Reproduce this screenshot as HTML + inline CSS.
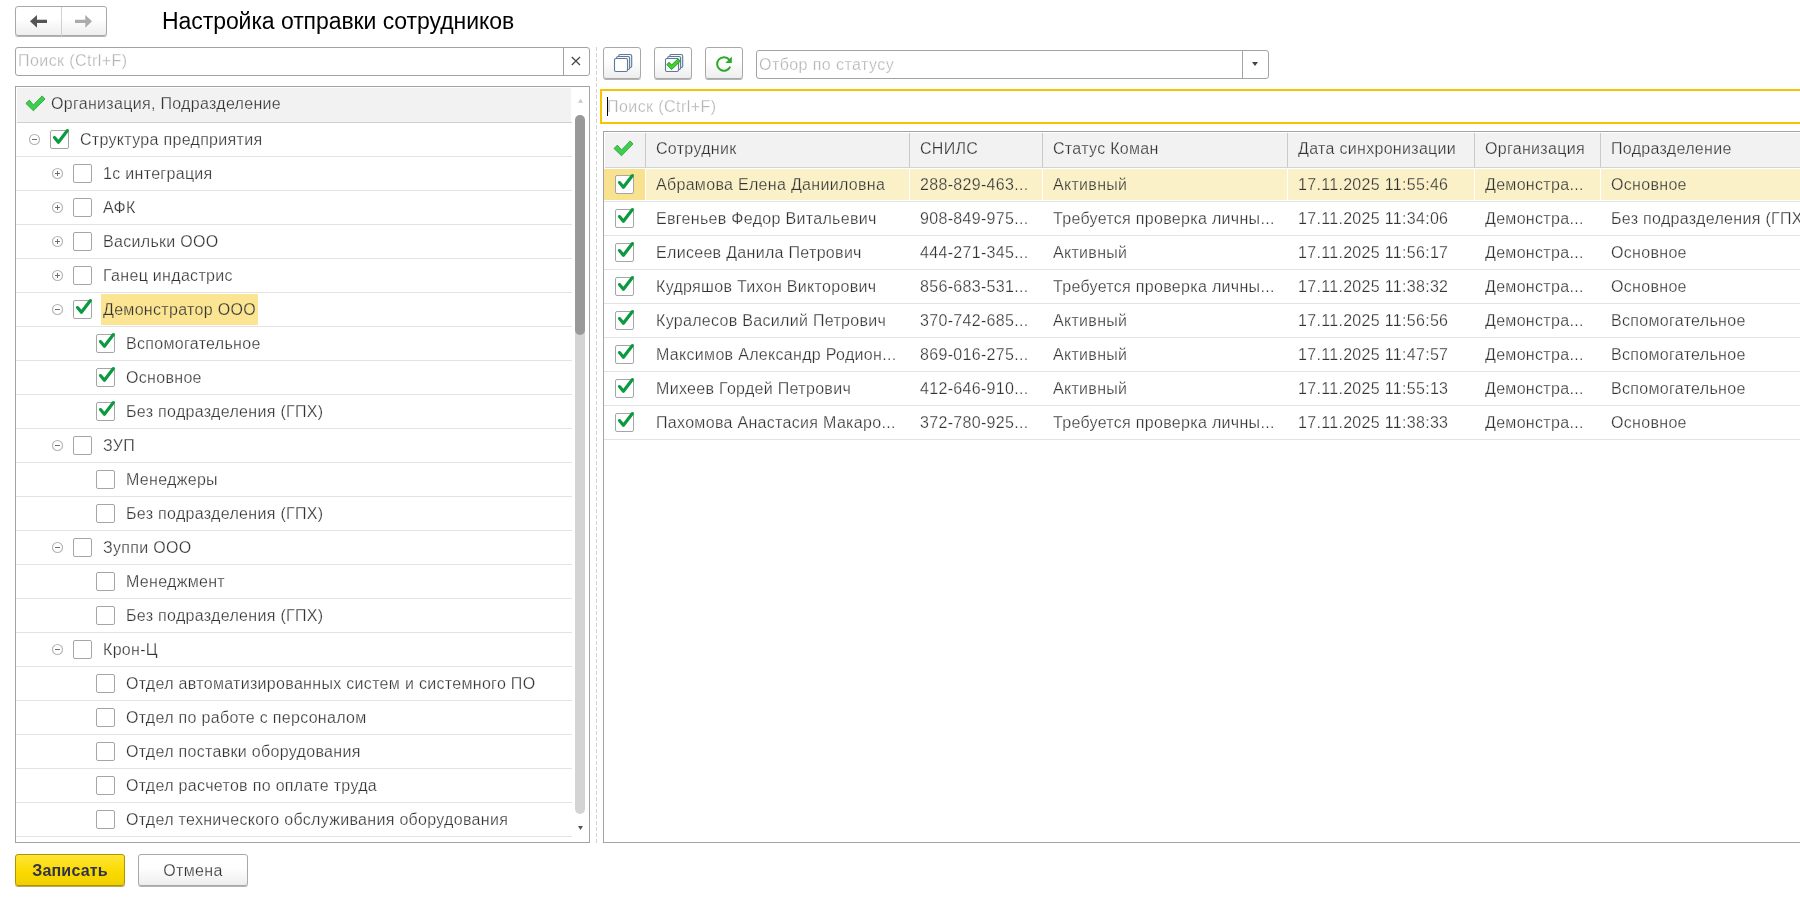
<!DOCTYPE html>
<html><head><meta charset="utf-8">
<style>
*{box-sizing:border-box;margin:0;padding:0}
html,body{width:1800px;height:900px;overflow:hidden;background:#fff;font-family:"Liberation Sans",sans-serif;font-size:16px;color:#333;letter-spacing:0.31px;-webkit-text-stroke:0.25px #fff}
.a{position:absolute}
.btn{position:absolute;border:1px solid #a8a8a8;border-radius:3px;background:linear-gradient(#fff 40%,#eeeeee);box-shadow:0 1px 0 #b4b4b4}
.title{position:absolute;left:162px;top:6px;font-size:23px;letter-spacing:-0.07px;color:#000;-webkit-text-stroke:0;line-height:30px;white-space:nowrap}
.inp{position:absolute;border:1px solid #a3a3a3;border-radius:3px;background:#fff}
.ph{position:absolute;color:#b5b5b5;letter-spacing:0.43px;white-space:nowrap;line-height:18px}
.tree{position:absolute;left:15px;top:86px;width:575px;height:757px;border:1px solid #a3a3a3;overflow:hidden}
.thead{position:absolute;left:1px;top:1px;width:554px;height:34px;background:#f2f2f2}
.trow{position:absolute;left:0;width:556px;height:34px;border-bottom:1px solid #e3e3e3}
.tt{position:absolute;top:0;line-height:34px;white-space:nowrap}
.cb{position:absolute;width:19px;height:19px;border:1px solid #a6a6a6;border-radius:2px;background:#fff}
.cb svg{position:absolute;left:-1px;top:-1px;overflow:visible}
.exp{position:absolute;width:13px;height:13px}
.exp svg{display:block}
.grid{position:absolute;left:603px;top:131px;width:1250px;height:712px;border:1px solid #a3a3a3;overflow:hidden}
.ghead{position:absolute;left:1px;top:1px;width:1300px;height:35px;background:#f2f2f2;border-bottom:1px solid #d4d4d4}
.gcol{position:absolute;top:0;height:34px;border-left:1px solid #c9c9c9}
.grow{position:absolute;left:0;width:1300px;height:34px;border-bottom:1px solid #e3e3e3}
.gc{position:absolute;top:0;line-height:33px;white-space:nowrap}
</style></head><body>
<div id="root" style="position:absolute;left:0;top:0;width:1800px;height:900px;will-change:transform">

<!-- nav buttons -->
<div class="btn" style="left:15px;top:6px;width:92px;height:30px"></div>
<div class="a" style="left:61px;top:7px;width:1px;height:29px;background:#d0d0d0"></div>
<svg class="a" style="left:0;top:0" width="120" height="40">
 <path d="M30 21.3 L37 15 L37 19.7 L47 19.7 L47 23 L37 23 L37 27.7 Z" fill="#555"/>
 <path d="M92 21.3 L85.3 15 L85.3 19.7 L75 19.7 L75 23 L85.3 23 L85.3 27.7 Z" fill="#ababab"/>
</svg>

<div class="title">Настройка отправки сотрудников</div>

<!-- left search -->
<div class="inp" style="left:15px;top:47px;width:575px;height:29px"></div>
<div class="a" style="left:563px;top:48px;width:1px;height:27px;background:#a3a3a3"></div>
<div class="ph" style="left:18px;top:52px">Поиск (Ctrl+F)</div>
<svg class="a" style="left:570px;top:55px" width="12" height="12"><path d="M1.8 2 L10 10 M10 2 L1.8 10" stroke="#444" stroke-width="1.2"/></svg>

<!-- tree -->
<div class="tree" id="tree">
 <div class="thead"></div>
 <div class="a" style="left:1px;top:35px;width:555px;height:1px;background:#cfcfcf"></div>
 <svg class="a" style="left:0;top:0" width="60" height="36"><path d="M9.9 16.4 L13.3 13.1 L17.4 17.9 L26.1 8.9 L29 12 L17.4 23.8 Z" fill="#3ccf4e" stroke="#2b9a35" stroke-width="0.8" stroke-linejoin="round"/></svg>
 <div class="tt" style="left:35px;top:0px;-webkit-text-stroke-color:#f2f2f2">Организация, Подразделение</div>
 <div class="trow" style="top:36px"><div class="exp" style="left:12px;top:10px"><svg width="13" height="13"><circle cx="6.5" cy="6.5" r="5" fill="#fff" stroke="#b4b4b4" stroke-width="1.15"/><path d="M4 6.5 H9" stroke="#6e6e6e" stroke-width="1"/></svg></div><div class="cb" style="left:34px;top:7px"><svg width="19" height="19"><path d="M4.5 7.6 L8.4 12.3 L17.4 0.6" fill="none" stroke="#0b9a3f" stroke-width="3.2" stroke-linecap="round" stroke-linejoin="round"/></svg></div><div class="tt" style="left:64px">Структура предприятия</div></div>
<div class="trow" style="top:70px"><div class="exp" style="left:35px;top:10px"><svg width="13" height="13"><circle cx="6.5" cy="6.5" r="5" fill="#fff" stroke="#b4b4b4" stroke-width="1.15"/><path d="M4 6.5 H9" stroke="#6e6e6e" stroke-width="1"/><path d="M6.5 4 V9" stroke="#6e6e6e" stroke-width="1"/></svg></div><div class="cb" style="left:57px;top:7px"></div><div class="tt" style="left:87px">1с интеграция</div></div>
<div class="trow" style="top:104px"><div class="exp" style="left:35px;top:10px"><svg width="13" height="13"><circle cx="6.5" cy="6.5" r="5" fill="#fff" stroke="#b4b4b4" stroke-width="1.15"/><path d="M4 6.5 H9" stroke="#6e6e6e" stroke-width="1"/><path d="M6.5 4 V9" stroke="#6e6e6e" stroke-width="1"/></svg></div><div class="cb" style="left:57px;top:7px"></div><div class="tt" style="left:87px">АФК</div></div>
<div class="trow" style="top:138px"><div class="exp" style="left:35px;top:10px"><svg width="13" height="13"><circle cx="6.5" cy="6.5" r="5" fill="#fff" stroke="#b4b4b4" stroke-width="1.15"/><path d="M4 6.5 H9" stroke="#6e6e6e" stroke-width="1"/><path d="M6.5 4 V9" stroke="#6e6e6e" stroke-width="1"/></svg></div><div class="cb" style="left:57px;top:7px"></div><div class="tt" style="left:87px">Васильки ООО</div></div>
<div class="trow" style="top:172px"><div class="exp" style="left:35px;top:10px"><svg width="13" height="13"><circle cx="6.5" cy="6.5" r="5" fill="#fff" stroke="#b4b4b4" stroke-width="1.15"/><path d="M4 6.5 H9" stroke="#6e6e6e" stroke-width="1"/><path d="M6.5 4 V9" stroke="#6e6e6e" stroke-width="1"/></svg></div><div class="cb" style="left:57px;top:7px"></div><div class="tt" style="left:87px">Ганец индастрис</div></div>
<div class="trow" style="top:206px"><div class="exp" style="left:35px;top:10px"><svg width="13" height="13"><circle cx="6.5" cy="6.5" r="5" fill="#fff" stroke="#b4b4b4" stroke-width="1.15"/><path d="M4 6.5 H9" stroke="#6e6e6e" stroke-width="1"/></svg></div><div class="cb" style="left:57px;top:7px"><svg width="19" height="19"><path d="M4.5 7.6 L8.4 12.3 L17.4 0.6" fill="none" stroke="#0b9a3f" stroke-width="3.2" stroke-linecap="round" stroke-linejoin="round"/></svg></div><div class="a" style="left:85px;top:1px;width:157px;height:31px;background:#fbe593"></div><div class="tt" style="left:87px;-webkit-text-stroke-color:#fbe593">Демонстратор ООО</div></div>
<div class="trow" style="top:240px"><div class="cb" style="left:80px;top:7px"><svg width="19" height="19"><path d="M4.5 7.6 L8.4 12.3 L17.4 0.6" fill="none" stroke="#0b9a3f" stroke-width="3.2" stroke-linecap="round" stroke-linejoin="round"/></svg></div><div class="tt" style="left:110px">Вспомогательное</div></div>
<div class="trow" style="top:274px"><div class="cb" style="left:80px;top:7px"><svg width="19" height="19"><path d="M4.5 7.6 L8.4 12.3 L17.4 0.6" fill="none" stroke="#0b9a3f" stroke-width="3.2" stroke-linecap="round" stroke-linejoin="round"/></svg></div><div class="tt" style="left:110px">Основное</div></div>
<div class="trow" style="top:308px"><div class="cb" style="left:80px;top:7px"><svg width="19" height="19"><path d="M4.5 7.6 L8.4 12.3 L17.4 0.6" fill="none" stroke="#0b9a3f" stroke-width="3.2" stroke-linecap="round" stroke-linejoin="round"/></svg></div><div class="tt" style="left:110px">Без подразделения (ГПХ)</div></div>
<div class="trow" style="top:342px"><div class="exp" style="left:35px;top:10px"><svg width="13" height="13"><circle cx="6.5" cy="6.5" r="5" fill="#fff" stroke="#b4b4b4" stroke-width="1.15"/><path d="M4 6.5 H9" stroke="#6e6e6e" stroke-width="1"/></svg></div><div class="cb" style="left:57px;top:7px"></div><div class="tt" style="left:87px">ЗУП</div></div>
<div class="trow" style="top:376px"><div class="cb" style="left:80px;top:7px"></div><div class="tt" style="left:110px">Менеджеры</div></div>
<div class="trow" style="top:410px"><div class="cb" style="left:80px;top:7px"></div><div class="tt" style="left:110px">Без подразделения (ГПХ)</div></div>
<div class="trow" style="top:444px"><div class="exp" style="left:35px;top:10px"><svg width="13" height="13"><circle cx="6.5" cy="6.5" r="5" fill="#fff" stroke="#b4b4b4" stroke-width="1.15"/><path d="M4 6.5 H9" stroke="#6e6e6e" stroke-width="1"/></svg></div><div class="cb" style="left:57px;top:7px"></div><div class="tt" style="left:87px">Зуппи ООО</div></div>
<div class="trow" style="top:478px"><div class="cb" style="left:80px;top:7px"></div><div class="tt" style="left:110px">Менеджмент</div></div>
<div class="trow" style="top:512px"><div class="cb" style="left:80px;top:7px"></div><div class="tt" style="left:110px">Без подразделения (ГПХ)</div></div>
<div class="trow" style="top:546px"><div class="exp" style="left:35px;top:10px"><svg width="13" height="13"><circle cx="6.5" cy="6.5" r="5" fill="#fff" stroke="#b4b4b4" stroke-width="1.15"/><path d="M4 6.5 H9" stroke="#6e6e6e" stroke-width="1"/></svg></div><div class="cb" style="left:57px;top:7px"></div><div class="tt" style="left:87px">Крон-Ц</div></div>
<div class="trow" style="top:580px"><div class="cb" style="left:80px;top:7px"></div><div class="tt" style="left:110px">Отдел автоматизированных систем и системного ПО</div></div>
<div class="trow" style="top:614px"><div class="cb" style="left:80px;top:7px"></div><div class="tt" style="left:110px">Отдел по работе с персоналом</div></div>
<div class="trow" style="top:648px"><div class="cb" style="left:80px;top:7px"></div><div class="tt" style="left:110px">Отдел поставки оборудования</div></div>
<div class="trow" style="top:682px"><div class="cb" style="left:80px;top:7px"></div><div class="tt" style="left:110px">Отдел расчетов по оплате труда</div></div>
<div class="trow" style="top:716px"><div class="cb" style="left:80px;top:7px"></div><div class="tt" style="left:110px">Отдел технического обслуживания оборудования</div></div>
 <!-- scrollbar -->
 <svg class="a" style="left:0;top:0" width="575" height="757">
  <path d="M564.5 11.7 L567 15.7 L562 15.7 Z" fill="#c8c8c8"/>
  <rect x="559" y="28" width="10" height="699" rx="5" fill="#d4d4d4"/>
  <rect x="559" y="28" width="10" height="220" rx="5" fill="#999"/>
  <path d="M562 739 L567 739 L564.5 743 Z" fill="#555"/>
 </svg>
</div>

<!-- dashed separator -->
<div class="a" style="left:596px;top:47px;width:1px;height:796px;background:repeating-linear-gradient(#d2d2d2 0 4px,transparent 4px 6px)"></div>

<!-- toolbar -->
<div class="btn" style="left:603px;top:47px;width:38px;height:32px"></div>
<div class="btn" style="left:654px;top:47px;width:38px;height:32px"></div>
<div class="btn" style="left:705px;top:47px;width:38px;height:32px"></div>
<svg class="a" style="left:600px;top:44px" width="150" height="40">
 <g fill="#f4f6f8" stroke="#5d7898" stroke-width="1.1">
  <rect x="18.7" y="10.5" width="13" height="13" rx="1.5"/>
  <rect x="16.6" y="12.5" width="13" height="13" rx="1.5"/>
  <rect x="14.5" y="14.5" width="13" height="13" rx="1.5" fill="#fff"/>
 </g>
 <g fill="#f4f6f8" stroke="#5d7898" stroke-width="1.1">
  <rect x="69.7" y="10.5" width="13" height="13" rx="1.5"/>
  <rect x="67.6" y="12.5" width="13" height="13" rx="1.5"/>
  <rect x="65.5" y="14.5" width="13" height="13" rx="1.5" fill="#fff"/>
 </g>
 <path d="M66.8 20.5 L69.2 18.3 L71.6 21 L78 14.8 L80.3 17.2 L71.6 25.6 Z" fill="#3fd12c" stroke="#1f8c1f" stroke-width="0.9" stroke-linejoin="round"/>
 <path d="M130.2 22.6 A6.8 6.8 0 1 1 129.3 15.8" fill="none" stroke="#2ca82c" stroke-width="2"/>
 <path d="M125.3 18.9 L131.8 18.9 L131.8 12.5 Z" fill="#2ca82c"/>
</svg>

<!-- combo -->
<div class="inp" style="left:756px;top:50px;width:513px;height:29px"></div>
<div class="a" style="left:1242px;top:51px;width:1px;height:27px;background:#a3a3a3"></div>
<div class="ph" style="left:759px;top:56px">Отбор по статусу</div>
<svg class="a" style="left:1250px;top:60px" width="10" height="8"><path d="M2 2 L8 2 L5 6 Z" fill="#444"/></svg>

<!-- right search -->
<div class="a" style="left:600px;top:89px;width:1250px;height:35px;border:2px solid #f7c400;background:#fff"></div>
<div class="a" style="left:607px;top:97px;width:1px;height:19px;background:#000"></div>
<div class="ph" style="left:607px;top:98px">Поиск (Ctrl+F)</div>

<!-- grid -->
<div class="grid" id="grid">
 <div class="ghead"></div>
 <div class="gcol" style="left:41px;top:1px"></div>
<div class="gc" style="left:52px;top:0px;line-height:34px;-webkit-text-stroke-color:#f2f2f2">Сотрудник</div>
<div class="gcol" style="left:305px;top:1px"></div>
<div class="gc" style="left:316px;top:0px;line-height:34px;-webkit-text-stroke-color:#f2f2f2">СНИЛС</div>
<div class="gcol" style="left:438px;top:1px"></div>
<div class="gc" style="left:449px;top:0px;line-height:34px;-webkit-text-stroke-color:#f2f2f2">Статус Коман</div>
<div class="gcol" style="left:683px;top:1px"></div>
<div class="gc" style="left:694px;top:0px;line-height:34px;-webkit-text-stroke-color:#f2f2f2">Дата синхронизации</div>
<div class="gcol" style="left:870px;top:1px"></div>
<div class="gc" style="left:881px;top:0px;line-height:34px;-webkit-text-stroke-color:#f2f2f2">Организация</div>
<div class="gcol" style="left:996px;top:1px"></div>
<div class="gc" style="left:1007px;top:0px;line-height:34px;-webkit-text-stroke-color:#f2f2f2">Подразделение</div>
<svg class="a" style="left:0;top:0" width="42" height="36"><path d="M10 16.5 L13.4 13.1 L17.5 17.9 L26.2 8.9 L29 12 L17.5 23.8 Z" fill="#3ccf4e" stroke="#2b9a35" stroke-width="0.8" stroke-linejoin="round"/></svg>
 <div class="grow" style="top:36px;height:34px"><div class="a" style="left:0;top:1px;width:41px;height:31px;background:#f9e28f"></div><div class="a" style="left:42px;top:1px;width:1300px;height:31px;background:#fbf1c9"></div><div class="a" style="left:305px;top:0px;width:1px;height:33px;background:#fff"></div><div class="a" style="left:438px;top:0px;width:1px;height:33px;background:#fff"></div><div class="a" style="left:683px;top:0px;width:1px;height:33px;background:#fff"></div><div class="a" style="left:870px;top:0px;width:1px;height:33px;background:#fff"></div><div class="a" style="left:996px;top:0px;width:1px;height:33px;background:#fff"></div><div class="cb" style="left:11px;top:7px"><svg width="19" height="19"><path d="M4.5 7.6 L8.4 12.3 L17.4 0.6" fill="none" stroke="#0b9a3f" stroke-width="3.2" stroke-linecap="round" stroke-linejoin="round"/></svg></div><div class="gc" style="left:52px;top:0px;-webkit-text-stroke-color:#fbf1c9">Абрамова Елена Данииловна</div><div class="gc" style="left:316px;top:0px;-webkit-text-stroke-color:#fbf1c9">288-829-463...</div><div class="gc" style="left:449px;top:0px;-webkit-text-stroke-color:#fbf1c9">Активный</div><div class="gc" style="left:694px;top:0px;-webkit-text-stroke-color:#fbf1c9">17.11.2025 11:55:46</div><div class="gc" style="left:881px;top:0px;-webkit-text-stroke-color:#fbf1c9">Демонстра...</div><div class="gc" style="left:1007px;top:0px;-webkit-text-stroke-color:#fbf1c9">Основное</div></div>
<div class="grow" style="top:70px;height:34px"><div class="cb" style="left:11px;top:7px"><svg width="19" height="19"><path d="M4.5 7.6 L8.4 12.3 L17.4 0.6" fill="none" stroke="#0b9a3f" stroke-width="3.2" stroke-linecap="round" stroke-linejoin="round"/></svg></div><div class="gc" style="left:52px;top:0px">Евгеньев Федор Витальевич</div><div class="gc" style="left:316px;top:0px">908-849-975...</div><div class="gc" style="left:449px;top:0px">Требуется проверка личны...</div><div class="gc" style="left:694px;top:0px">17.11.2025 11:34:06</div><div class="gc" style="left:881px;top:0px">Демонстра...</div><div class="gc" style="left:1007px;top:0px">Без подразделения (ГПХ)</div></div>
<div class="grow" style="top:104px;height:34px"><div class="cb" style="left:11px;top:7px"><svg width="19" height="19"><path d="M4.5 7.6 L8.4 12.3 L17.4 0.6" fill="none" stroke="#0b9a3f" stroke-width="3.2" stroke-linecap="round" stroke-linejoin="round"/></svg></div><div class="gc" style="left:52px;top:0px">Елисеев Данила Петрович</div><div class="gc" style="left:316px;top:0px">444-271-345...</div><div class="gc" style="left:449px;top:0px">Активный</div><div class="gc" style="left:694px;top:0px">17.11.2025 11:56:17</div><div class="gc" style="left:881px;top:0px">Демонстра...</div><div class="gc" style="left:1007px;top:0px">Основное</div></div>
<div class="grow" style="top:138px;height:34px"><div class="cb" style="left:11px;top:7px"><svg width="19" height="19"><path d="M4.5 7.6 L8.4 12.3 L17.4 0.6" fill="none" stroke="#0b9a3f" stroke-width="3.2" stroke-linecap="round" stroke-linejoin="round"/></svg></div><div class="gc" style="left:52px;top:0px">Кудряшов Тихон Викторович</div><div class="gc" style="left:316px;top:0px">856-683-531...</div><div class="gc" style="left:449px;top:0px">Требуется проверка личны...</div><div class="gc" style="left:694px;top:0px">17.11.2025 11:38:32</div><div class="gc" style="left:881px;top:0px">Демонстра...</div><div class="gc" style="left:1007px;top:0px">Основное</div></div>
<div class="grow" style="top:172px;height:34px"><div class="cb" style="left:11px;top:7px"><svg width="19" height="19"><path d="M4.5 7.6 L8.4 12.3 L17.4 0.6" fill="none" stroke="#0b9a3f" stroke-width="3.2" stroke-linecap="round" stroke-linejoin="round"/></svg></div><div class="gc" style="left:52px;top:0px">Куралесов Василий Петрович</div><div class="gc" style="left:316px;top:0px">370-742-685...</div><div class="gc" style="left:449px;top:0px">Активный</div><div class="gc" style="left:694px;top:0px">17.11.2025 11:56:56</div><div class="gc" style="left:881px;top:0px">Демонстра...</div><div class="gc" style="left:1007px;top:0px">Вспомогательное</div></div>
<div class="grow" style="top:206px;height:34px"><div class="cb" style="left:11px;top:7px"><svg width="19" height="19"><path d="M4.5 7.6 L8.4 12.3 L17.4 0.6" fill="none" stroke="#0b9a3f" stroke-width="3.2" stroke-linecap="round" stroke-linejoin="round"/></svg></div><div class="gc" style="left:52px;top:0px">Максимов Александр Родион...</div><div class="gc" style="left:316px;top:0px">869-016-275...</div><div class="gc" style="left:449px;top:0px">Активный</div><div class="gc" style="left:694px;top:0px">17.11.2025 11:47:57</div><div class="gc" style="left:881px;top:0px">Демонстра...</div><div class="gc" style="left:1007px;top:0px">Вспомогательное</div></div>
<div class="grow" style="top:240px;height:34px"><div class="cb" style="left:11px;top:7px"><svg width="19" height="19"><path d="M4.5 7.6 L8.4 12.3 L17.4 0.6" fill="none" stroke="#0b9a3f" stroke-width="3.2" stroke-linecap="round" stroke-linejoin="round"/></svg></div><div class="gc" style="left:52px;top:0px">Михеев Гордей Петрович</div><div class="gc" style="left:316px;top:0px">412-646-910...</div><div class="gc" style="left:449px;top:0px">Активный</div><div class="gc" style="left:694px;top:0px">17.11.2025 11:55:13</div><div class="gc" style="left:881px;top:0px">Демонстра...</div><div class="gc" style="left:1007px;top:0px">Вспомогательное</div></div>
<div class="grow" style="top:274px;height:34px"><div class="cb" style="left:11px;top:7px"><svg width="19" height="19"><path d="M4.5 7.6 L8.4 12.3 L17.4 0.6" fill="none" stroke="#0b9a3f" stroke-width="3.2" stroke-linecap="round" stroke-linejoin="round"/></svg></div><div class="gc" style="left:52px;top:0px">Пахомова Анастасия Макаро...</div><div class="gc" style="left:316px;top:0px">372-780-925...</div><div class="gc" style="left:449px;top:0px">Требуется проверка личны...</div><div class="gc" style="left:694px;top:0px">17.11.2025 11:38:33</div><div class="gc" style="left:881px;top:0px">Демонстра...</div><div class="gc" style="left:1007px;top:0px">Основное</div></div>
</div>

<!-- bottom buttons -->
<div class="a" style="left:15px;top:854px;width:110px;height:32px;border:1px solid #ad9400;border-radius:3px;background:linear-gradient(#ffe637,#fbda00 55%,#f0cf00);box-shadow:0 1px 0 #b8a860"></div>
<div class="a" style="left:15px;top:854px;width:110px;height:32px;line-height:33px;text-align:center;font-weight:bold;color:#30334a;letter-spacing:0.2px;-webkit-text-stroke:0">Записать</div>
<div class="btn" style="left:138px;top:854px;width:110px;height:32px"></div>
<div class="a" style="left:138px;top:854px;width:110px;height:32px;line-height:33px;text-align:center;color:#333;-webkit-text-stroke-color:#f6f6f6">Отмена</div>

</div>
</body></html>
